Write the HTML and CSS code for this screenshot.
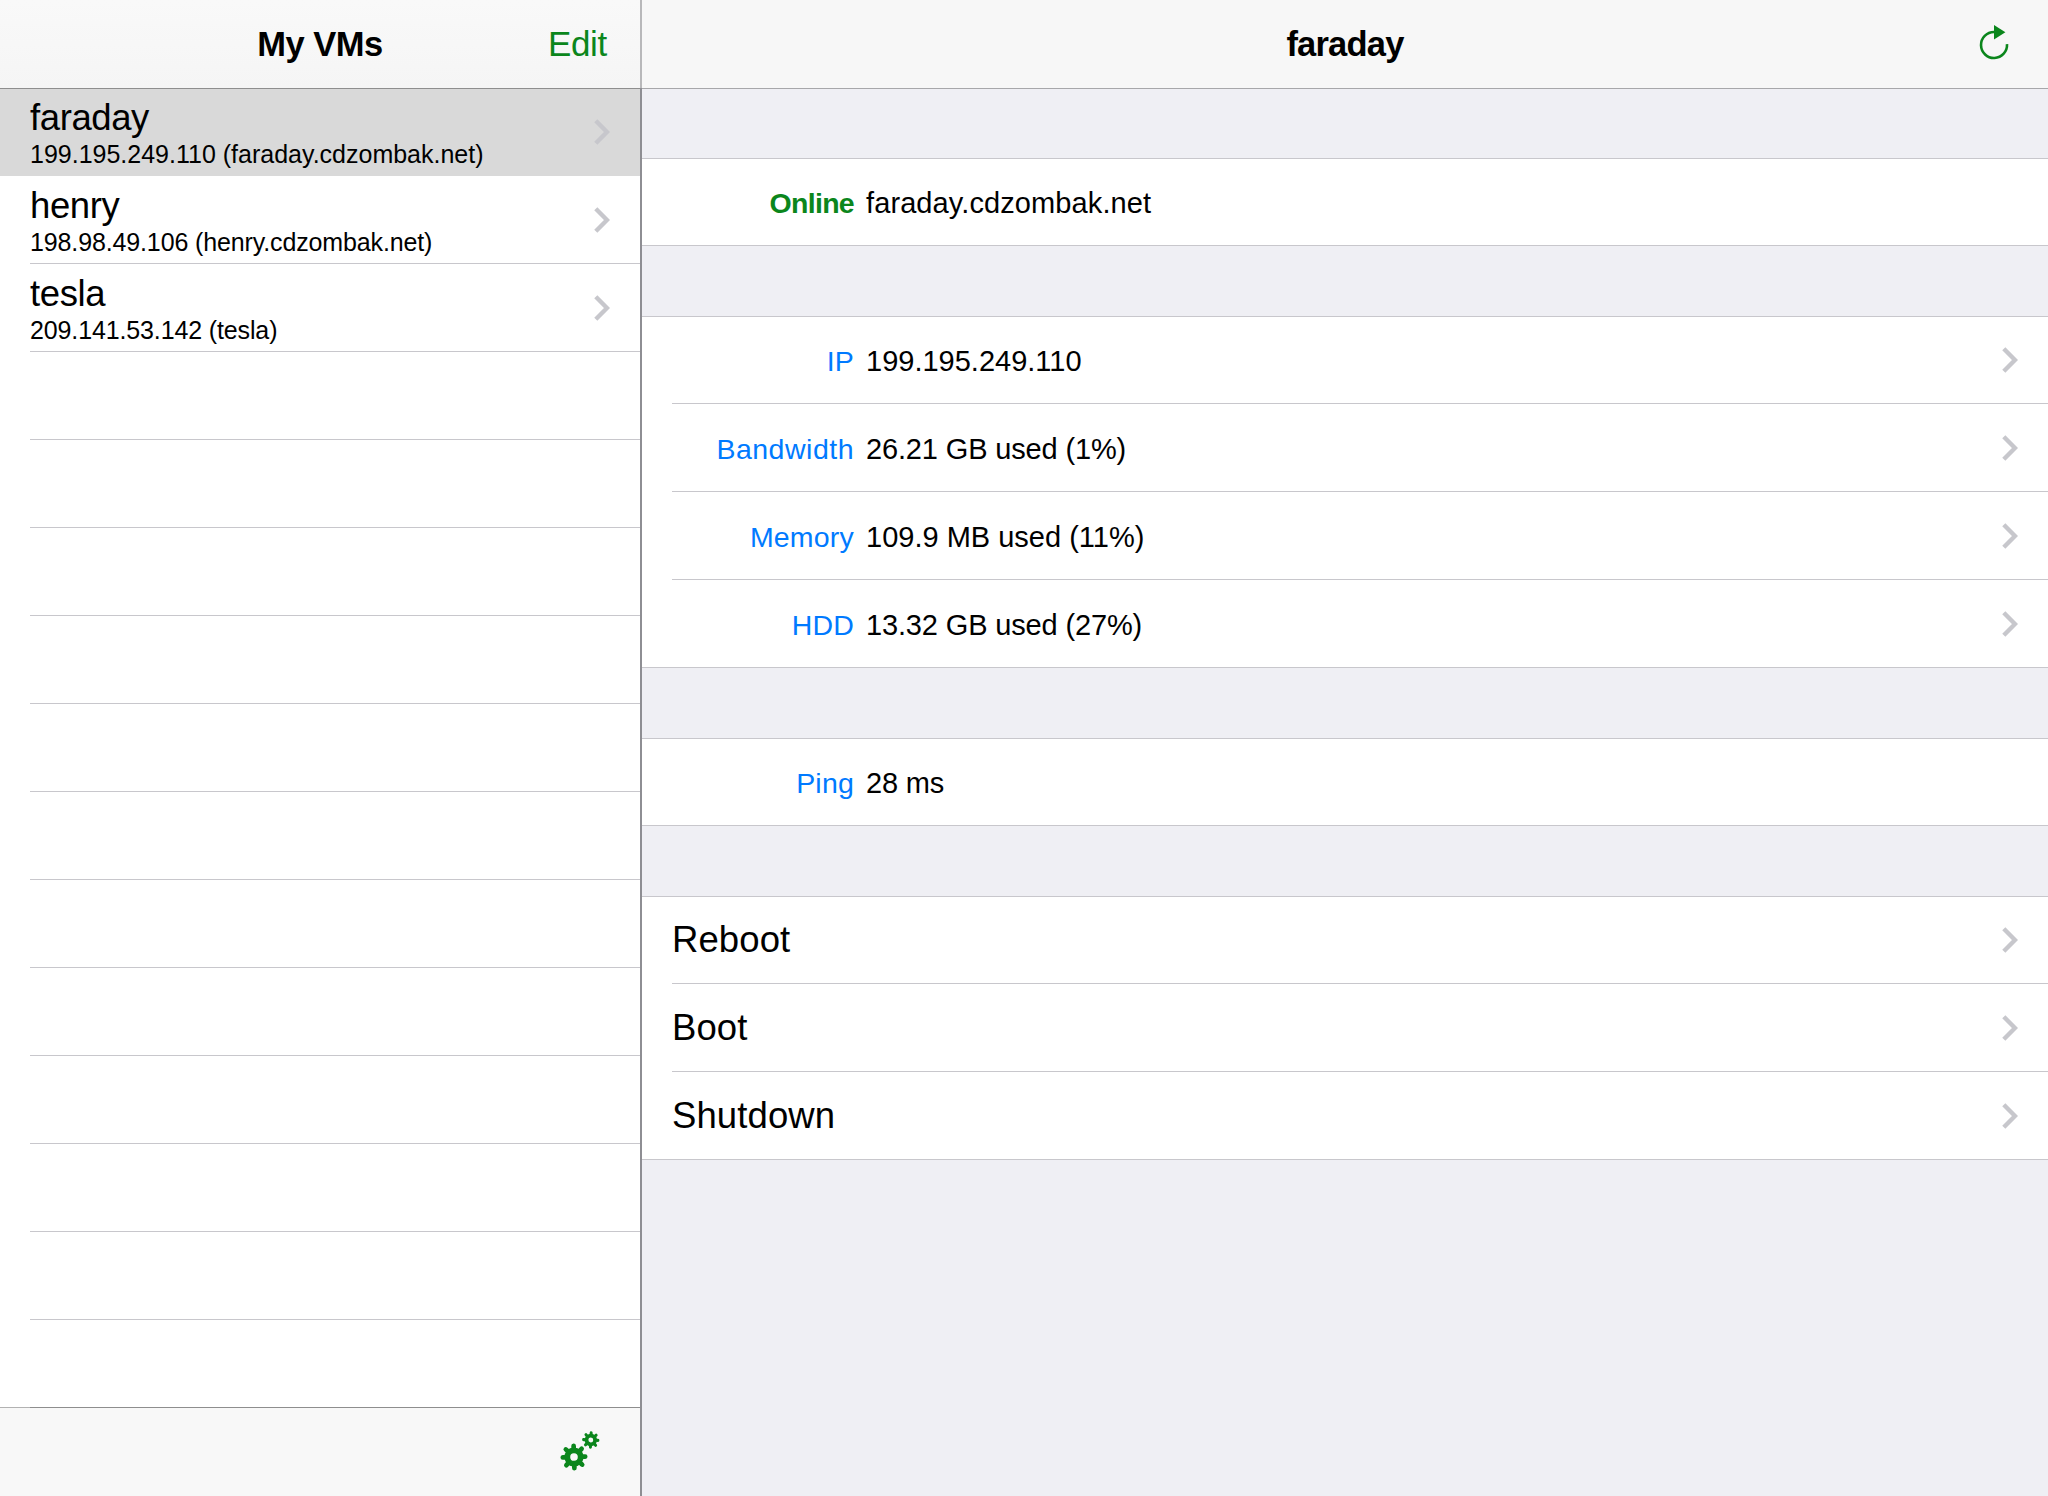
FILE: index.html
```html
<!DOCTYPE html>
<html lang="en">
<head>
<meta charset="utf-8">
<title>My VMs</title>
<link rel="stylesheet" href="styles.css">
</head>
<body>
<svg class="defs" aria-hidden="true">
  <symbol id="chevron" viewBox="0 0 16 26"><path d="M1.8 1.8 13 13 1.8 24.2" fill="none" stroke="#c7c7cc" stroke-width="4.4"/></symbol>
  <symbol id="gear" viewBox="-14 -14 28 28">
    <g fill="none" stroke="#0b861c">
      <circle r="6.7" stroke-width="5.8"/>
      <path stroke-width="4.7" stroke-linecap="round" d="M0-8V-11.2M0 8V11.2M-8 0H-11.2M8 0H11.2M5.7-5.7 7.9-7.9M-5.7 5.7-7.9 7.9M-5.7-5.7-7.9-7.9M5.7 5.7 7.9 7.9"/>
    </g>
  </symbol>
</svg>
<div class="app">
  <aside class="master">
    <header class="bar master-bar">
      <h1 class="title">My VMs</h1>
      <a class="edit">Edit</a>
    </header>
    <ul class="list">
      <li class="vm selected"><div class="vm-text"><div class="name">faraday</div><div class="address">199.195.249.110 (faraday.cdzombak.net)</div></div><svg class="chevron"><use href="#chevron"/></svg></li>
      <li class="vm"><div class="vm-text"><div class="name">henry</div><div class="address tight">198.98.49.106 (henry.cdzombak.net)</div></div><svg class="chevron"><use href="#chevron"/></svg></li>
      <li class="vm"><div class="vm-text"><div class="name">tesla</div><div class="address tight">209.141.53.142 (tesla)</div></div><svg class="chevron"><use href="#chevron"/></svg></li>
      <li class="vm"></li><li class="vm"></li><li class="vm"></li><li class="vm"></li>
      <li class="vm"></li><li class="vm"></li><li class="vm"></li><li class="vm"></li>
      <li class="vm"></li><li class="vm"></li><li class="vm"></li><li class="vm last"></li>
    </ul>
    <footer class="toolbar">
      <svg class="gears" viewBox="0 0 42 42">
        <use href="#gear" x="0" y="0" width="28" height="28" transform="translate(0 14) rotate(-2 14 14)"/>
        <use href="#gear" x="0" y="0" width="18" height="18" transform="translate(21.8 2) rotate(3 9 9)"/>
      </svg>
    </footer>
  </aside>
  <div class="divider"><div class="divider-top"></div></div>
  <main class="detail">
    <header class="bar detail-bar">
      <h2 class="title">faraday</h2>
      <svg class="refresh" viewBox="0 0 30 36">
        <path d="M28 20.2A13 13 0 1 1 15 8" fill="none" stroke="#0b861c" stroke-width="2.6"/>
        <path d="M15 1V15.4L26.4 8.2Z" fill="#0b861c"/>
      </svg>
    </header>
    <section class="group">
      <div class="row"><span class="label online">Online</span><span class="value host">faraday.cdzombak.net</span></div>
    </section>
    <section class="group">
      <div class="row"><span class="label">IP</span><span class="value">199.195.249.110</span><svg class="chevron"><use href="#chevron"/></svg></div>
      <div class="row"><span class="label wide">Bandwidth</span><span class="value tight">26.21 GB used (1%)</span><svg class="chevron"><use href="#chevron"/></svg></div>
      <div class="row"><span class="label">Memory</span><span class="value">109.9 MB used (11%)</span><svg class="chevron"><use href="#chevron"/></svg></div>
      <div class="row"><span class="label">HDD</span><span class="value tight">13.32 GB used (27%)</span><svg class="chevron"><use href="#chevron"/></svg></div>
    </section>
    <section class="group">
      <div class="row"><span class="label">Ping</span><span class="value tight">28 ms</span></div>
    </section>
    <section class="group">
      <div class="row"><span class="action">Reboot</span><svg class="chevron"><use href="#chevron"/></svg></div>
      <div class="row"><span class="action">Boot</span><svg class="chevron"><use href="#chevron"/></svg></div>
      <div class="row"><span class="action">Shutdown</span><svg class="chevron"><use href="#chevron"/></svg></div>
    </section>
  </main>
</div>
</body>
</html>
```
FILE: styles.css
```css
* { box-sizing: border-box; }
body {
  margin: 0;
  font-family: "Liberation Sans", Arial, sans-serif;
  color: #000;
  background: #fff;
}
.defs { display: none; }
.app { display: flex; width: 2048px; height: 1496px; overflow: hidden; }

/* bars */
.bar {
  display: grid;
  align-items: center;
  height: 89px;
  padding-bottom: 1px;
  line-height: 88px;
  border-bottom: 1px solid #a7a7aa;
  background: #f7f7f7;
  flex: none;
}
.title {
  grid-column: 2;
  margin: 0;
  text-align: center;
  font-size: 34.5px;
  font-weight: bold;
  letter-spacing: -0.5px;
  height: 88px;
}

/* left column */
.master { display: flex; flex-direction: column; width: 640px; flex: none; }
.master-bar {
  grid-template-columns: 140px 1fr 140px;
  background: linear-gradient(#f9f9f9, #f5f5f5);
  border-bottom-color: #8e8e8e;
}
.edit {
  height: 88px;
  padding-right: 33px;
  text-align: right;
  font-size: 35px;
  letter-spacing: -0.3px;
  color: #0b861c;
}
.list { list-style: none; margin: -1px 0 0; padding: 0; flex: none; }
.vm {
  display: flex;
  align-items: center;
  height: 88px;
  margin-left: 30px;
  border-bottom: 1px solid #c8c7cc;
}
.vm.selected {
  margin-left: 0;
  padding-left: 30px;
  border-bottom-color: #d9d9d9;
  border-top: 1px solid #8e8e8e;
  background: #d9d9d9;
}
.vm.selected .vm-text { margin-top: -1px; }
.vm.last { border-bottom-color: #8e8e8e; }
.vm-text { flex: 1; align-self: flex-start; padding-top: 10px; white-space: nowrap; }
.name { font-size: 36.5px; line-height: 40px; letter-spacing: -0.4px; }
.address { font-size: 25px; line-height: 32px; }
.address.tight { letter-spacing: -0.13px; }
.chevron { width: 16px; height: 26px; margin-right: 30px; flex: none; }
.toolbar {
  display: flex;
  justify-content: flex-end;
  height: 89px;
  margin-top: -1px;
  padding: 22px 38px 0 0;
  background: linear-gradient(90deg, #b2b2b2 30px, #8e8e8e 30px) top / 100% 1px no-repeat #f8f8f8;
}
.gears { width: 42px; height: 42px; }

.divider { width: 2px; background: #8e8e93; flex: none; }
.divider-top { height: 88px; background: #b8b8ba; }

/* right column */
.detail { flex: 1; background: #efeff4; }
.detail-bar { grid-template-columns: 140px 1fr 140px; }
.detail-bar .title { letter-spacing: -0.8px; }
.refresh { width: 30px; height: 36px; margin: 0 39px 4px 0; justify-self: end; }
.group { margin-top: 70px; background: #fff; }
.detail-bar + .group { margin-top: 69px; }
.row {
  display: flex;
  align-items: center;
  height: 88px;
  margin-left: 30px;
  line-height: 87px;
  border-bottom: 1px solid #c8c7cc;
  white-space: nowrap;
}
.row:first-child { border-top: 1px solid #c8c7cc; line-height: 85px; padding-bottom: 1px; }
.row:first-child, .row:last-child { margin-left: 0; padding-left: 30px; }
.row:first-child:not(:last-child) {
  border-bottom: 0;
  padding-bottom: 2px;
  background: linear-gradient(#c8c7cc, #c8c7cc) 30px 100% / 100% 1px no-repeat;
}
.label {
  width: 182px;
  padding-top: 3px;
  text-align: right;
  font-size: 28.5px;
  letter-spacing: 0.2px;
  color: #007aff;
}
.label.wide { letter-spacing: 0.5px; }
.label.online { font-size: 28.5px; font-weight: bold; letter-spacing: -0.7px; color: #0b861c; }
.value { flex: 1; padding: 3px 0 0 12px; font-size: 29px; }
.value.host { letter-spacing: 0.1px; }
.value.tight { letter-spacing: -0.15px; }
.action { flex: 1; font-size: 36.5px; letter-spacing: 0.1px; }
```
